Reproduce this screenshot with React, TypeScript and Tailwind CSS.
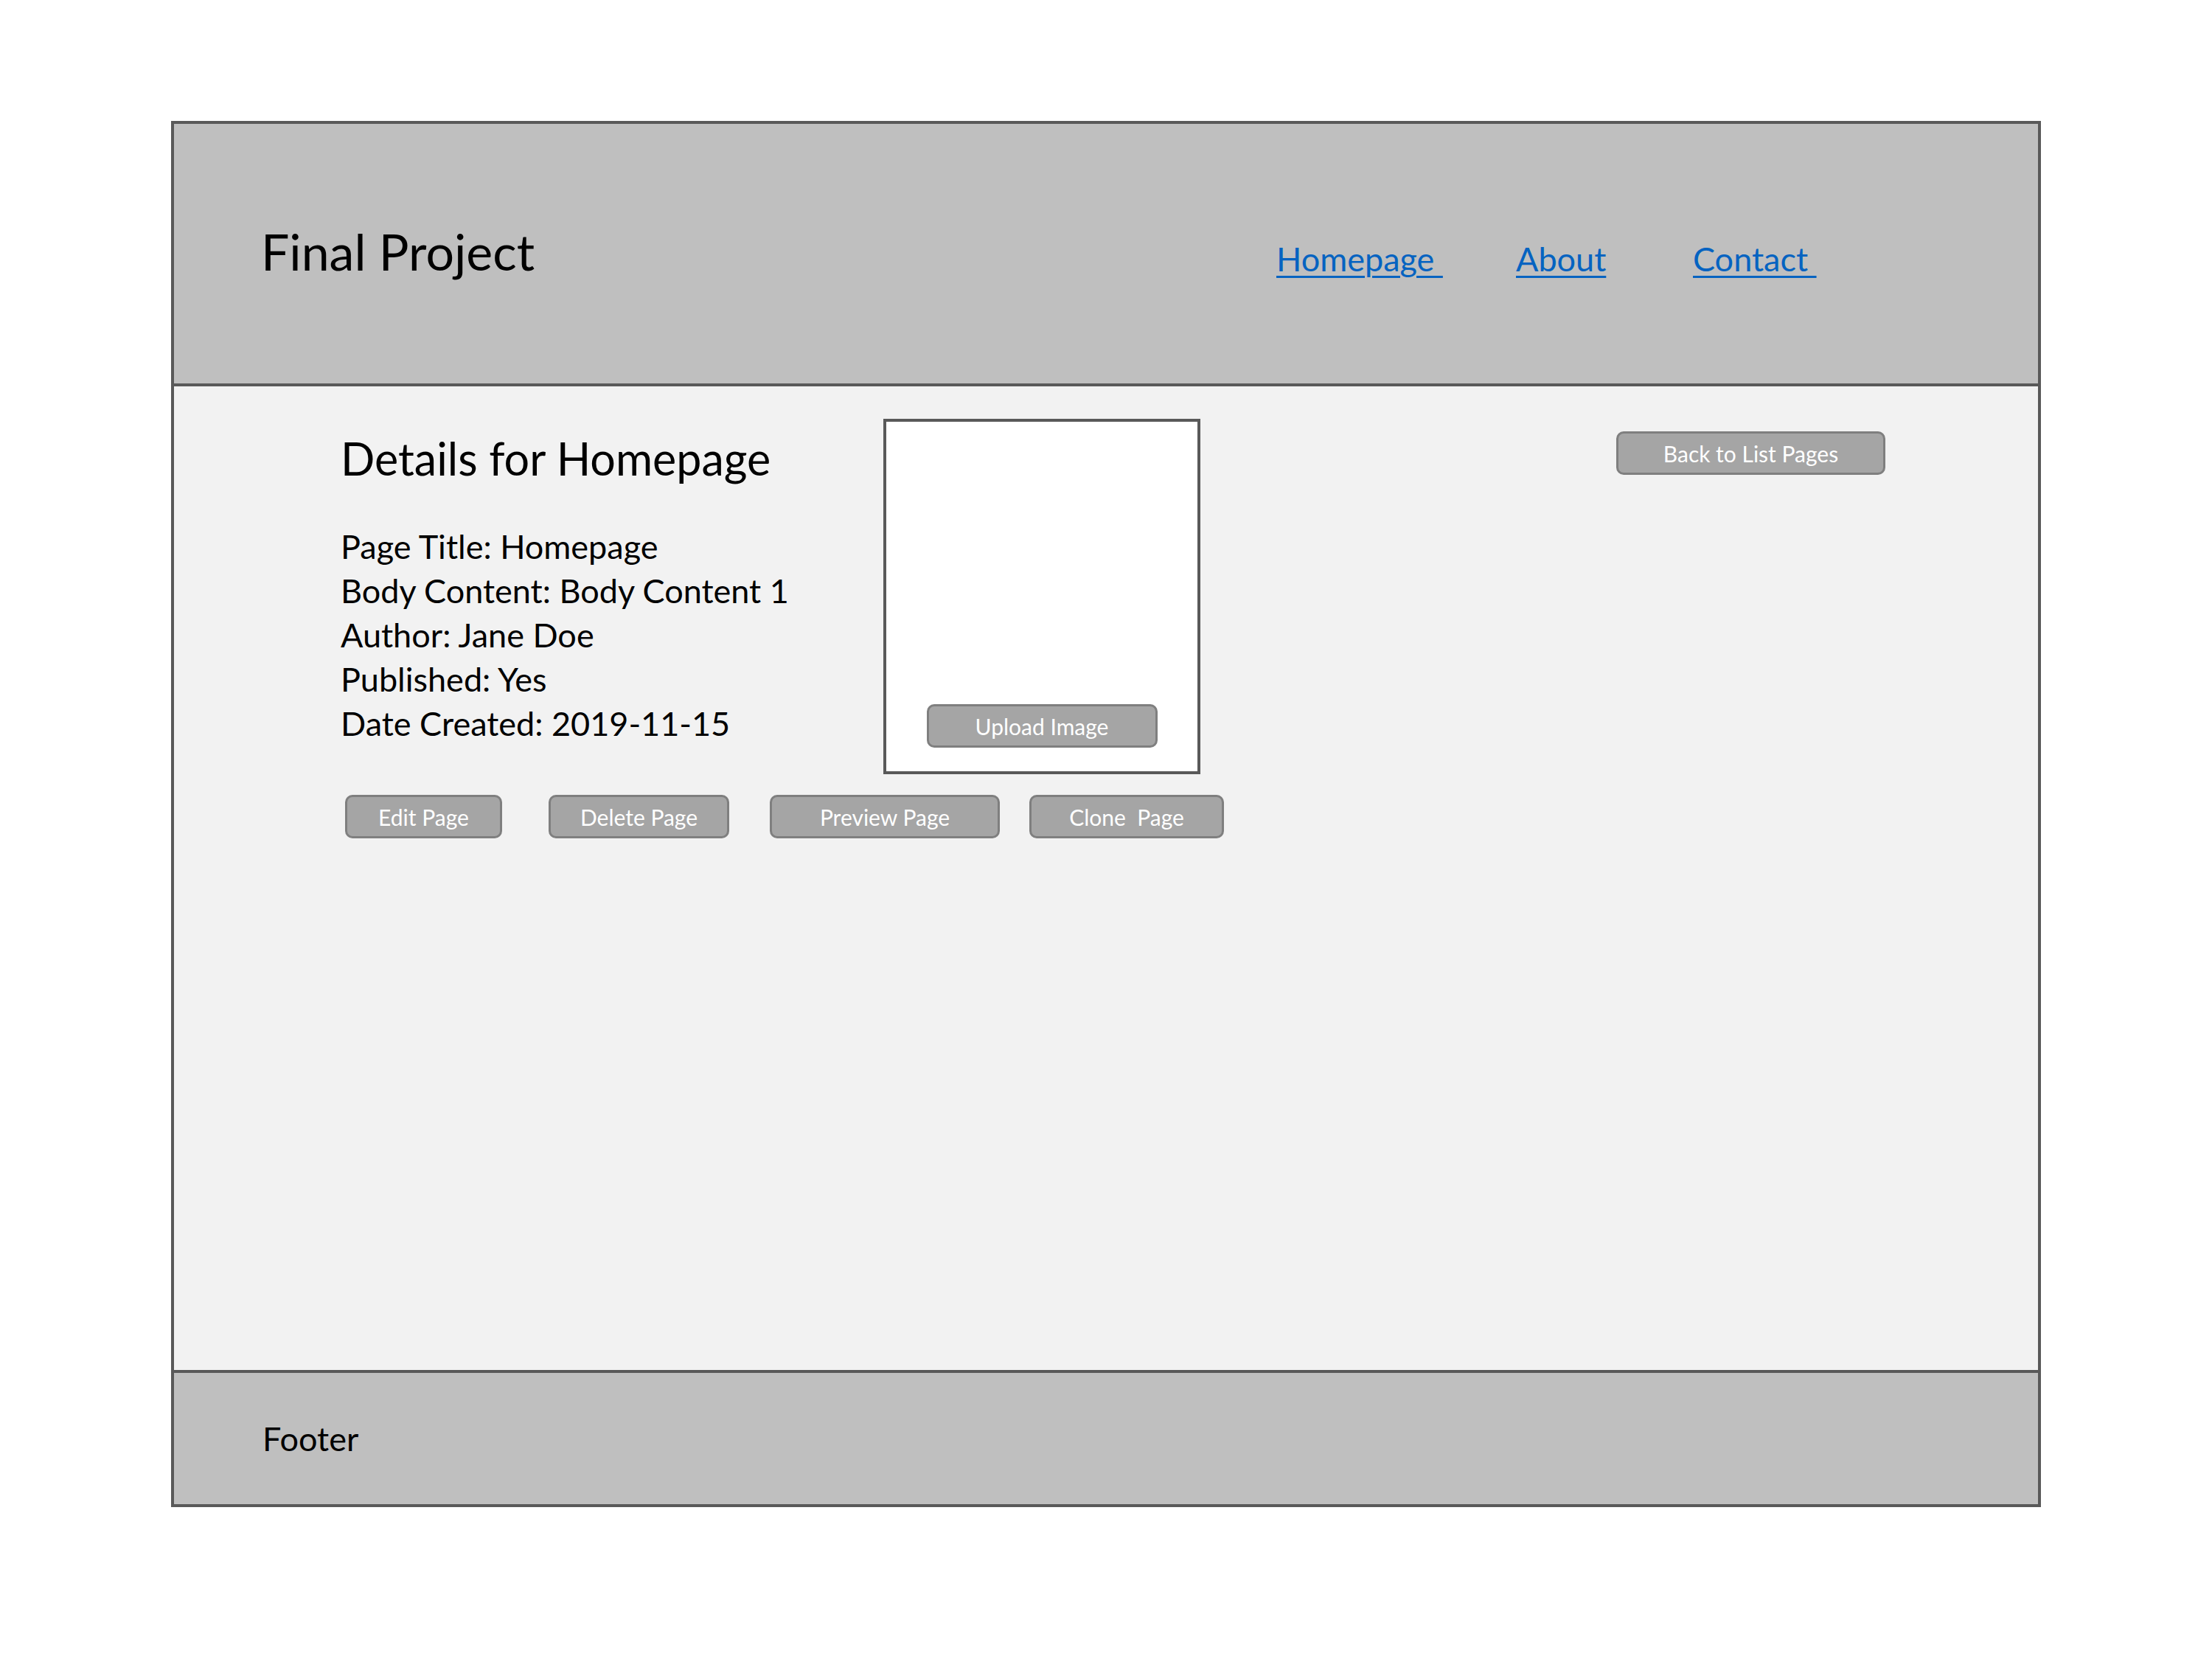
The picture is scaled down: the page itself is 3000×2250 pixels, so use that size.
const font = { fontFamily: "Lato, 'Open Sans', sans-serif" };

function Btn({ label, w }: { label: string; w: string }) {
  return (
    <div
      className={`${w} h-[59px] flex items-center justify-center rounded-[10px] border-[3px] border-[#7f7f7f] bg-[#a5a5a5] text-[30px] text-white leading-none whitespace-pre`}
    >
      {label}
    </div>
  );
}

export default function App() {
  return (
    <div className="w-[3000px] h-[2250px] bg-white pt-[164px] pl-[232px]" style={font}>
      <div className="w-[2536px] h-[1880px] border-4 border-[#595959] flex flex-col">
        {/* header */}
        <header className="h-[356px] shrink-0 bg-[#bfbfbf] border-b-4 border-[#595959] flex items-center pl-[118px]">
          <div className="w-[1377px] mb-[6px] text-[68px] leading-none text-black">Final Project</div>
          <nav className="flex items-center pt-[14px] text-[45px] leading-none text-[#0563c1]">
            <a className="w-[325px] underline decoration-[3px] underline-offset-[6px]" href="#">
              {"Homepage\u00a0"}
            </a>
            <a className="w-[240px] underline decoration-[3px] underline-offset-[6px]" href="#">
              About
            </a>
            <a className="underline decoration-[3px] underline-offset-[6px]" href="#">
              {"Contact\u00a0"}
            </a>
          </nav>
        </header>

        {/* content */}
        <main className="flex-1 bg-[#f2f2f2] pt-[44px] pl-[226px]">
          <div className="flex">
            <div className="w-[736px]">
              <h1 className="mt-[18px] text-[61px] leading-[72px] font-normal text-black">Details for Homepage</h1>
              <div className="mt-[53px] text-[45px] leading-[60px] text-black">
                <div>Page Title: Homepage</div>
                <div>Body Content: Body Content 1</div>
                <div>Author: Jane Doe</div>
                <div>Published: Yes</div>
                <div>Date Created: 2019-11-15</div>
              </div>
            </div>
            <div className="w-[430px] h-[482px] bg-white border-4 border-[#595959] flex flex-col items-center justify-end pb-[32px]">
              <Btn label="Upload Image" w="w-[313px]" />
            </div>
            <div className="ml-[564px] mt-[17px]">
              <Btn label="Back to List Pages" w="w-[365px]" />
            </div>
          </div>
          <div className="flex mt-[28px] ml-[6px]">
            <Btn label="Edit Page" w="w-[213px]" />
            <div className="ml-[63px]">
              <Btn label="Delete Page" w="w-[245px]" />
            </div>
            <div className="ml-[55px]">
              <Btn label="Preview Page" w="w-[312px]" />
            </div>
            <div className="ml-[40px]">
              <Btn label="Clone  Page" w="w-[264px]" />
            </div>
          </div>
        </main>

        {/* footer */}
        <footer className="h-[182px] shrink-0 bg-[#bfbfbf] border-t-4 border-[#595959] flex items-center pl-[120px]">
          <span className="text-[45px] leading-none text-black">Footer</span>
        </footer>
      </div>
    </div>
  );
}
